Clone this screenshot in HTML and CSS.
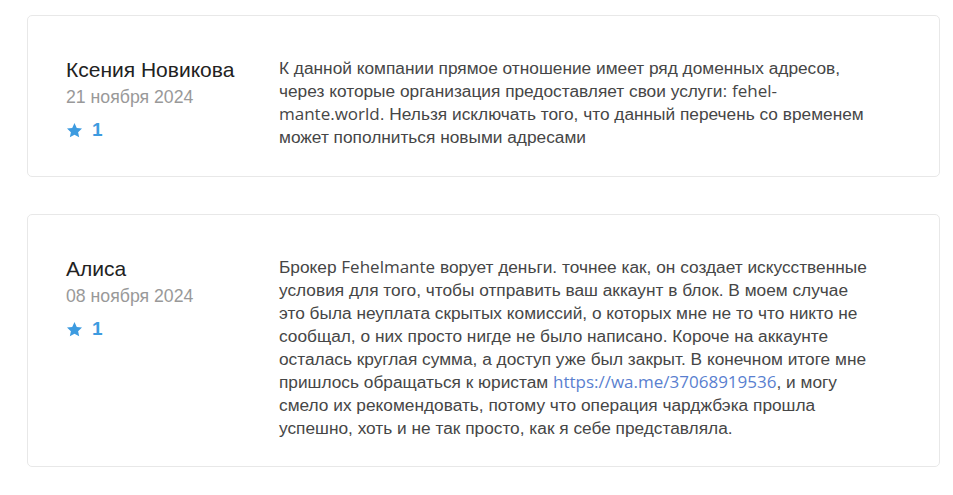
FILE: index.html
```html
<!DOCTYPE html>
<html lang="ru">
<head>
<meta charset="utf-8">
<link rel="stylesheet" href="styles.css">
</head>
<body>
<div class="list">
  <div class="card">
    <div class="author">
      <div class="name">Ксения Новикова</div>
      <div class="date">21 ноября 2024</div>
      <div class="rating">
        <svg class="star" viewBox="0 0 24 24" width="17" height="17"><path d="M12 1.5l3.2 6.9 7.4.8-5.5 5.1 1.5 7.4L12 17.9l-6.6 3.8 1.5-7.4-5.5-5.1 7.4-.8z"/></svg>
        <span class="count">1</span>
      </div>
    </div>
    <p class="text">К данной компании прямое отношение имеет ряд доменных адресов,<br>через которые организация предоставляет свои услуги: <span class="lat">fehel-<br>mante.world</span>. Нельзя исключать того, что данный перечень со временем<br>может пополниться новыми адресами</p>
  </div>
  <div class="card">
    <div class="author">
      <div class="name">Алиса</div>
      <div class="date">08 ноября 2024</div>
      <div class="rating">
        <svg class="star" viewBox="0 0 24 24" width="17" height="17"><path d="M12 1.5l3.2 6.9 7.4.8-5.5 5.1 1.5 7.4L12 17.9l-6.6 3.8 1.5-7.4-5.5-5.1 7.4-.8z"/></svg>
        <span class="count">1</span>
      </div>
    </div>
    <p class="text">Брокер <span class="lat">Fehelmante</span> ворует деньги. точнее как, он создает искусственные<br>условия для того, чтобы отправить ваш аккаунт в блок. В моем случае<br>это была неуплата скрытых комиссий, о которых мне не то что никто не<br>сообщал, о них просто нигде не было написано. Короче на аккаунте<br>осталась круглая сумма, а доступ уже был закрыт. В конечном итоге мне<br>пришлось обращаться к юристам <a class="lat link" href="#">https://wa.me/37068919536</a>, и могу<br>смело их рекомендовать, потому что операция чарджбэка прошла<br>успешно, хоть и не так просто, как я себе представляла.</p>
  </div>
</div>
</body>
</html>
```

FILE: styles.css
```css
html, body {
  margin: 0;
  padding: 0;
  background: #fff;
}
body {
  font-family: "Liberation Sans", Arial, sans-serif;
  color: #444;
}
.list {
  display: flex;
  flex-direction: column;
  gap: 37px;
  padding: 15px 13px 0 27px;
}
.card {
  display: flex;
  border: 1px solid #e8e8e8;
  border-radius: 5px;
  padding: 41px 40px 26px 38px;
}
.card:first-child {
  padding-bottom: 27px;
}
.author {
  width: 213px;
  flex-shrink: 0;
}
.name {
  font-size: 21px;
  line-height: 26px;
  color: #222;
  margin-top: 0;
}
.date {
  font-size: 17.7px;
  line-height: 28px;
  color: #999;
}
.rating {
  display: flex;
  align-items: center;
  gap: 9px;
  margin-top: 8px;
  color: #3d9be0;
}
.star {
  fill: #3d9be0;
}
.count {
  font-size: 19px;
  font-weight: bold;
}
.text {
  margin: 0;
  flex: 1;
  font-size: 17.3px;
  line-height: 23px;
  color: #464646;
  white-space: nowrap;
}
.lat {
  font-family: "Open Sans", sans-serif;
  font-size: 17px;
  line-height: 0;
}
.link {
  color: #5a7fd0;
  text-decoration: none;
}
```
